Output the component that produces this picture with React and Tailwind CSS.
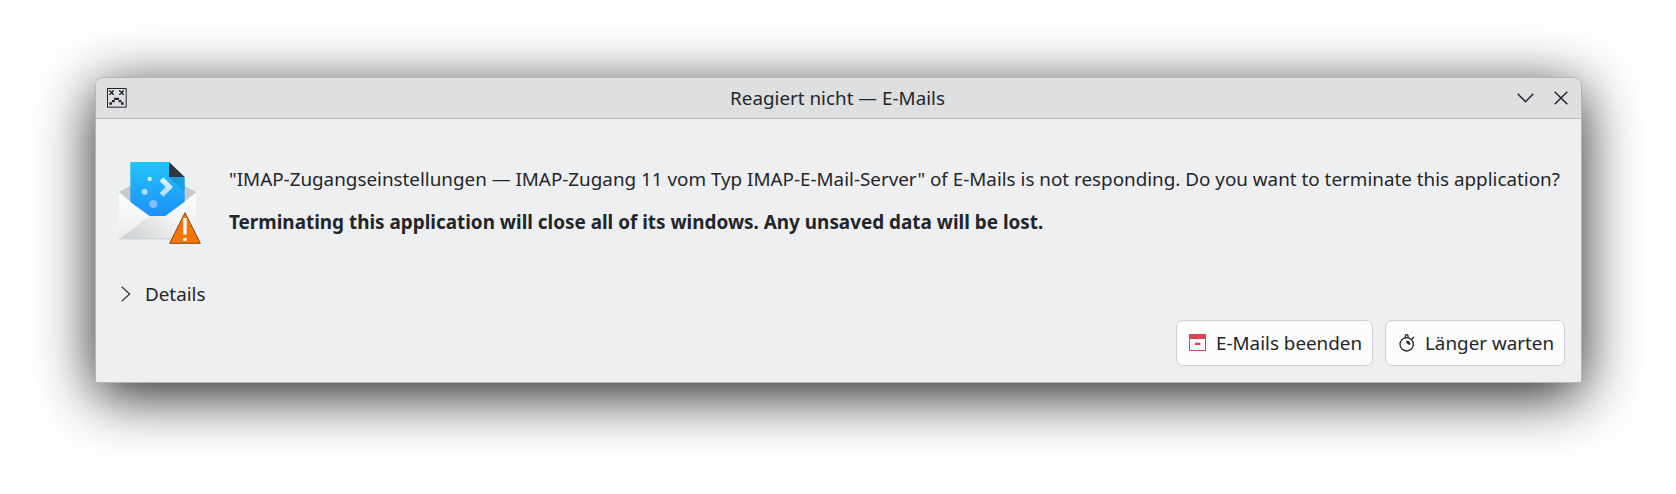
import React from "react";

const SadIcon = () => (
  <svg viewBox="0 0 60 60" className="w-5 h-5">
    <rect x="1.5" y="1.5" width="56" height="56" fill="none" stroke="#232629" strokeWidth="3" />
    <g fill="#232629">
      {/* eyes */}
      <path d="M6 7h5v4h-5zM16 7h5v4h-5zM10 10h8v8h-8zM6 17h5v4h-5zM16 17h5v4h-5z" />
      <path d="M36 7h5v4h-5zM46 7h5v4h-5zM40 10h8v8h-8zM36 17h5v4h-5zM46 17h5v4h-5z" />
      {/* mouth */}
      <path d="M21 29h15v7h-15zM15 36h8v7h-8zM35 36h8v7h-8zM7 43h8v7h-8zM42 43h8v7h-8z" />
    </g>
  </svg>
);

const MailAppIcon = () => (
  <svg viewBox="24 33 252 252" className="w-[84px] h-[84px]">
    <defs>
      <linearGradient id="sheet" x1="0" y1="0" x2="0" y2="1">
        <stop offset="0" stopColor="#20c5fa" />
        <stop offset="1" stopColor="#1d8ef8" />
      </linearGradient>
      <linearGradient id="envelope" x1="0" y1="0" x2="0" y2="1">
        <stop offset="0" stopColor="#fdfdfd" />
        <stop offset="1" stopColor="#eceded" />
      </linearGradient>
      <linearGradient id="flap" x1="0" y1="0.3" x2="1" y2="0">
        <stop offset="0" stopColor="#d2d3d4" />
        <stop offset="0.5" stopColor="#ebecec" />
        <stop offset="1" stopColor="#f5f5f6" />
      </linearGradient>
      <linearGradient id="arrow" x1="0" y1="0" x2="0" y2="1">
        <stop offset="0" stopColor="#e4f6ff" />
        <stop offset="1" stopColor="#b2dafd" />
      </linearGradient>
      <linearGradient id="foldShade" x1="0" y1="0" x2="1" y2="1">
        <stop offset="0" stopColor="#157fb0" stopOpacity="0.65" />
        <stop offset="1" stopColor="#157fb0" stopOpacity="0.15" />
      </linearGradient>
    </defs>

    <path d="M27 127L60 107H224L258 127L180 190H105z" fill="#c5cacd" />
    <path d="M61 36H177L224 82V200H61z" fill="url(#sheet)" />
    <path d="M177 81H224V127z" fill="url(#foldShade)" />
    <path d="M177 36L224 81H177z" fill="#31363b" />

    <circle cx="119" cy="87" r="6.5" fill="#e3f6fe" />
    <circle cx="104" cy="125" r="9" fill="#aadffd" />
    <circle cx="130" cy="162" r="12" fill="#7fbffb" />
    <path d="M149 93L160 82L189 111L160 140L149 129L167 111z" fill="url(#arrow)" />

    <path d="M27 128L60 155L119 198H166L224 155L258 128V268H27z" fill="url(#envelope)" />
    <path d="M27 268L119 198H166L258 268z" fill="url(#flap)" />
    <path d="M27 264H182V268H27z" fill="#d3d5d7" />
    <path d="M60 268H182V271H60z" fill="#dbe5ee" />

    {/* warning emblem */}
    <path d="M225 188L271 280H179z" fill="#f67400" stroke="#85491a" strokeWidth="3" strokeLinejoin="round" />
    <path d="M220 204H230V254H220zM220 264H230V273H220z" fill="#fff" />
  </svg>
);

const ArchiveIcon = () => (
  <svg viewBox="0 0 51 51" className="mb-px w-[17px] h-[17px]">
    <path d="M0 0H51V51H0zM3 15V48H48V15z" fill="#da4453" fillRule="evenodd" />
    <rect x="18" y="26" width="16" height="7" fill="#da4453" />
  </svg>
);

const TimerIcon = () => (
  <svg viewBox="-3 0 51 54" className="w-[17px] h-[18px]" fill="none" stroke="#232629" strokeWidth="4">
    <circle cx="23" cy="31" r="20" />
    <path d="M19 11V5Q19 2 23 2T27 5V11M37 17L45 9" />
    <path d="M22 20Q34 19 34 32L29 32L22 26z" fill="#232629" stroke="none" />
  </svg>
);

function DialogButton({ icon, label, className }) {
  return (
    <button className={`flex h-[46px] items-center rounded-[7px] border border-[#cfd1d2] bg-[#fcfcfc] pl-3 ${className}`}>
      {icon}
      <span className="ml-2.5 whitespace-nowrap">{label}</span>
    </button>
  );
}

export default function App() {
  return (
    <div className="h-[494px] w-[1676px] overflow-hidden bg-white px-[95px] pt-[77px] font-['Noto_Sans',sans-serif] text-[18.84px] leading-[26px] text-[#232629]">
      <div className="flex h-[306px] w-[1487px] flex-col rounded-t-[9px] border border-[#b3b5b6] bg-[#eeeff1] shadow-[0_12px_58px_rgba(0,0,0,0.88)]">
        {/* Title bar */}
        <div className="flex h-[41px] shrink-0 items-center rounded-t-[8px] border-b border-[#b8babc] bg-[#dedfe1] pl-[11px] pr-[13px]">
          <div className="w-[60px]">
            <SadIcon />
          </div>
          <div className="flex-1 text-center">Reagiert nicht — E-Mails</div>
          <div className="flex w-[60px] items-center justify-end gap-5">
            <svg viewBox="0 0 51 30" className="h-2.5 w-[17px] shrink-0" fill="none" stroke="#232629" strokeWidth="4.5">
              <path d="M2 2L25.500 26L49 2" />
            </svg>
            <svg viewBox="0 0 42 42" className="mb-px h-3.5 w-3.5 shrink-0" fill="none" stroke="#232629" strokeWidth="4.5">
              <path d="M2 2L40 40M40 2L2 40" />
            </svg>
          </div>
        </div>

        {/* Message */}
        <div className="flex pl-[22px] pt-[42px]">
          <MailAppIcon />
          <div className="ml-[27px] flex flex-col gap-[17px] whitespace-nowrap pt-[5px]">
            <p>
              "IMAP-Zugangseinstellungen — IMAP-Zugang 11 vom Typ IMAP-E-Mail-Server" of E-Mails is not responding. Do you want to terminate this application?
            </p>
            <p className="text-[18.9px] font-bold">
              Terminating this application will close all of its windows. Any unsaved data will be lost.
            </p>
          </div>
        </div>

        {/* Details toggle */}
        <div className="mt-9 flex items-center pl-[25px]">
          <svg viewBox="0 0 30 48" className="h-4 w-2.5" fill="none" stroke="#3c3f42" strokeWidth="4">
            <path d="M2 2L26 24L2 46" />
          </svg>
          <span className="ml-3.5">Details</span>
        </div>

        <div className="mt-[13px] flex justify-end gap-3 pr-4">
          <DialogButton icon={<ArchiveIcon />} label="E-Mails beenden" className="w-[197px]" />
          <DialogButton icon={<TimerIcon />} label="Länger warten" className="w-[180px]" />
        </div>
      </div>
    </div>
  );
}
